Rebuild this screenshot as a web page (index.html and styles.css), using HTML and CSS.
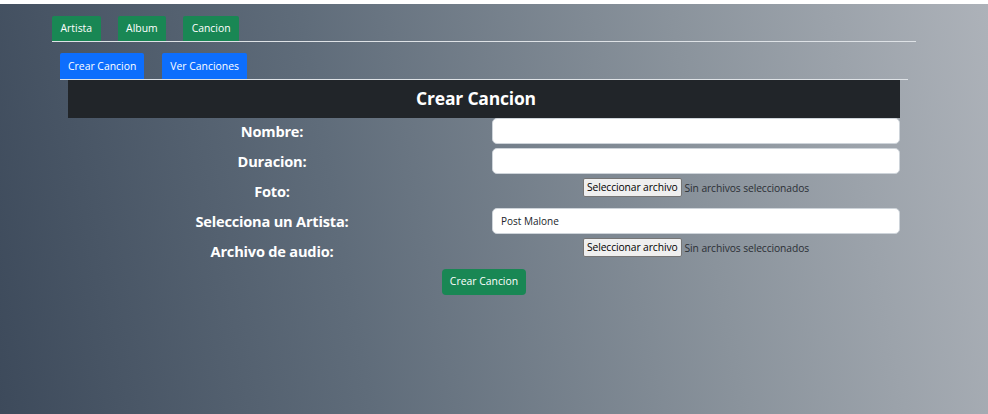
FILE: index.html
```html
<!DOCTYPE html>
<html lang="es">
<head>
<meta charset="utf-8">
<title>Crear Cancion</title>
<link rel="stylesheet" href="styles.css">
</head>
<body>
<div class="page">
  <div class="shell">
    <nav class="tabs main-tabs">
      <a class="btn btn-green" href="#">Artista</a>
      <a class="btn btn-green" href="#">Album</a>
      <a class="btn btn-green" href="#">Cancion</a>
    </nav>
    <div class="section">
      <nav class="tabs sub-tabs">
        <a class="btn btn-blue" href="#">Crear Cancion</a>
        <a class="btn btn-blue" href="#">Ver Canciones</a>
      </nav>
      <div class="card">
        <h3 class="card-title">Crear Cancion</h3>
        <form class="form">
          <label class="lbl">Nombre:</label>
          <input class="field" type="text">
          <label class="lbl">Duracion:</label>
          <input class="field" type="text">
          <label class="lbl">Foto:</label>
          <div class="file"><span class="file-btn">Seleccionar archivo</span><span class="file-txt">Sin archivos seleccionados</span></div>
          <label class="lbl">Selecciona un Artista:</label>
          <div class="field select">Post Malone</div>
          <label class="lbl">Archivo de audio:</label>
          <div class="file"><span class="file-btn">Seleccionar archivo</span><span class="file-txt">Sin archivos seleccionados</span></div>
          <div class="submit-row"><button class="btn btn-green btn-submit" type="button">Crear Cancion</button></div>
        </form>
      </div>
    </div>
  </div>
</div>
</body>
</html>
```
FILE: styles.css
```css
html, body {
  margin: 0;
  padding: 0;
  background: #ffffff;
}
body {
  padding-top: 4px;
  font-family: "Open Sans", "Noto Sans", sans-serif;
}
.page {
  height: 410px;
  background: linear-gradient(80deg, #3d4a5b 0%, #5f6c7a 35%, #8a939c 70%, #adb2b9 100%);
  padding-top: 12px;
  box-sizing: border-box;
}
.shell {
  margin-left: 52px;
  width: 864px;
}
.tabs {
  display: flex;
  border-bottom: 1px solid #dee2e6;
}
.main-tabs {
  gap: 17px;
}
.sub-tabs {
  gap: 18px;
}
.section {
  margin: 0 8px;
  padding-top: 11px;
}
.btn {
  display: inline-block;
  font-family: inherit;
  font-size: 10.4px;
  line-height: 17px;
  padding: 4px 8px 4px;
  color: #ffffff;
  text-decoration: none;
  border: 0;
  border-radius: 2px 2px 0 0;
}
.main-tabs .btn {
  padding: 4px 8.5px 4px;
}
.sub-tabs .btn {
  font-size: 10.4px;
  padding: 5px 8px 4px;
}
.btn-green { background: #198754; }
.btn-blue { background: #0d6efd; }
.card {
  margin: 0 8px;
}
.card-title {
  margin: 0;
  background: #212529;
  color: #ffffff;
  text-align: center;
  font-size: 17.5px;
  font-weight: 700;
  height: 38px;
  line-height: 36px;
  letter-spacing: -0.2px;
  padding-right: 16px;
}
.form {
  display: grid;
  grid-template-columns: 1fr 1fr;
  column-gap: 16px;
  row-gap: 4px;
  align-items: center;
}
.lbl {
  color: #ffffff;
  font-weight: 700;
  font-size: 14.6px;
  line-height: 26px;
  text-align: center;
  letter-spacing: -0.2px;
}
.field {
  display: block;
  box-sizing: border-box;
  height: 26px;
  width: 100%;
  margin: 0;
  border: 1px solid #ced4da;
  border-radius: 5px;
  background: #ffffff;
  font-family: inherit;
}
.select {
  font-size: 10px;
  line-height: 24px;
  padding-left: 8px;
  color: #212529;
}
.file {
  align-self: start;
  display: flex;
  justify-content: center;
  align-items: center;
  font-size: 10.3px;
  height: 19px;
}
.file-btn {
  background: #efefef;
  border: 1px solid #767676;
  border-radius: 2px;
  color: #000000;
  padding: 1px 3px;
  line-height: 15px;
  letter-spacing: -0.1px;
}
.file-txt {
  color: #2b2f35;
  margin-left: 3px;
  letter-spacing: -0.1px;
}
.submit-row {
  grid-column: 1 / 3;
  display: flex;
  justify-content: center;
  margin-top: 1px;
}
.btn-submit {
  border-radius: 4px;
  padding: 4px 8px 5px;
  cursor: pointer;
}
```
